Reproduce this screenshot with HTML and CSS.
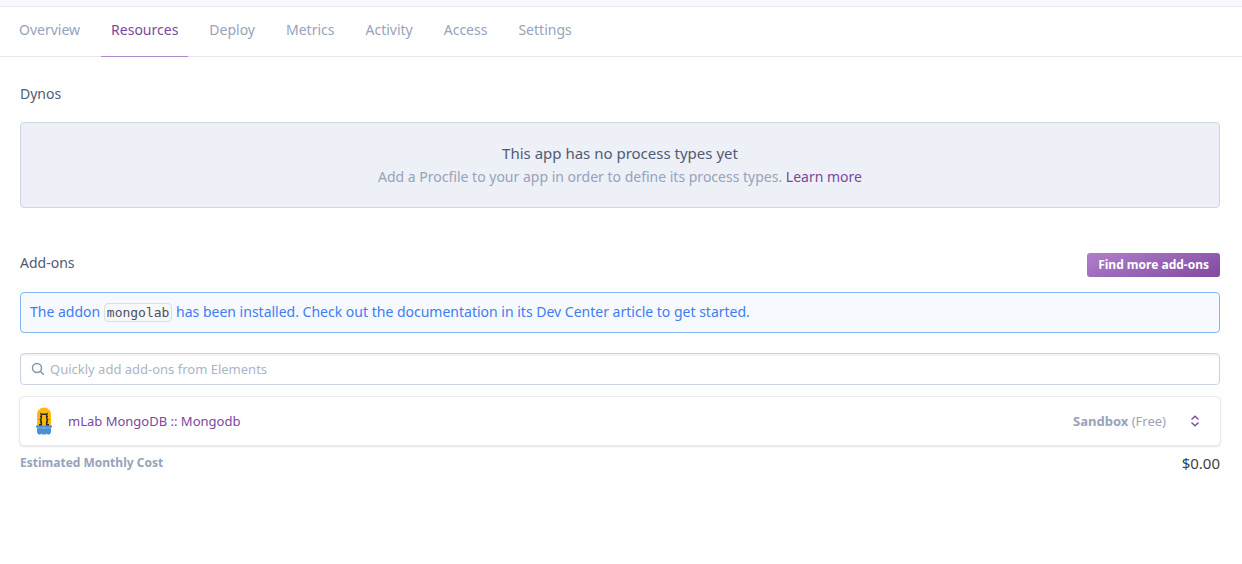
FILE: index.html
```html
<!DOCTYPE html>
<html lang="en">
<head>
<meta charset="utf-8">
<title>Resources</title>
<link rel="stylesheet" href="styles.css">
</head>
<body>
<nav class="tabs" aria-label="App sections">
  <a class="tab" href="#overview">Overview</a>
  <a class="tab tab-active" href="#resources" aria-current="page">Resources</a>
  <a class="tab" href="#deploy">Deploy</a>
  <a class="tab" href="#metrics">Metrics</a>
  <a class="tab" href="#activity">Activity</a>
  <a class="tab" href="#access">Access</a>
  <a class="tab" href="#settings">Settings</a>
</nav>
<main class="content">
  <section class="dynos">
    <h2 class="section-title">Dynos</h2>
    <div class="empty-panel">
      <p class="empty-title">This app has no process types yet</p>
      <p class="empty-text">Add a Procfile to your app in order to define its process types. <a class="link" href="#learn">Learn more</a></p>
    </div>
  </section>
  <section class="addons">
    <header class="addons-header">
      <h2 class="section-title">Add-ons</h2>
      <button class="find-button" type="button">Find more add-ons</button>
    </header>
    <p class="notice">The addon <code class="code">mongolab</code> has been installed. Check out the documentation in its Dev Center article to get started.</p>
    <label class="search">
      <svg class="search-icon" viewBox="0 0 14 14" aria-hidden="true"><circle cx="6" cy="6" r="4.500"/><path d="M9.300 9.300L12.800 12.800"/></svg>
      <input class="search-input" type="text" aria-label="Search add-ons" placeholder="Quickly add add-ons from Elements">
    </label>
    <div class="addon">
      <svg class="addon-logo" viewBox="0 0 16 28" aria-hidden="true">
        <path fill="#fdb90b" d="M1 19V7.500a7 7 0 0 1 14 0V19z"/>
        <path fill="#4a90d2" d="M0 18.500h16v2h-1v5l-1.500 2h-2l-.7-1-.8 1H6l-.8-1-.7 1h-2L1 25.500v-5H0z"/>
        <path fill="#79b4e6" d="M1 20.500h14v1H1zM7.500 19h1v3h-1z"/>
        <path fill="none" stroke="#2b2a28" stroke-width="1.500" d="M3 17.700h2.300V15l-.6-2 .6-2V7.300h5.400V11l.6 2-.6 2v2.700H13"/>
        <path fill="none" stroke="#2b2a28" stroke-width="1" d="M5.300 7l-1.300-1M10.700 7l1.300-1M5.300 9.500H4M10.700 9.500H12M5 12.500H3.500M11 12.500h1.500M5.300 15H3.900M10.700 15h1.400"/>
      </svg>
      <a class="link addon-name" href="#mlab">mLab MongoDB :: Mongodb</a>
      <span class="plan"><strong>Sandbox</strong> (Free)</span>
      <button class="plan-button" type="button" aria-label="Change plan">
        <svg class="chevrons" viewBox="0 0 10 12" aria-hidden="true"><path d="M1.500 4.500L5 1.200l3.500 3.300M1.500 7.500L5 10.800l3.500-3.300"/></svg>
      </button>
    </div>
    <footer class="cost">
      <span class="cost-label">Estimated Monthly Cost</span>
      <span class="cost-value">$0.00</span>
    </footer>
  </section>
</main>
</body>
</html>
```
FILE: styles.css
```css
* {
  box-sizing: border-box;
}

body {
  margin: 0;
  background: #fff;
  color: #4f5b75;
  font: 14px/20px "Noto Sans", "Open Sans", sans-serif;
}

h2,
p {
  margin: 0;
}

.tabs {
  display: flex;
  gap: 11px;
  padding: 0 9px;
  border-top: 6px solid #f6f8fc;
  border-bottom: 1px solid #e3e8f0;
  box-shadow: inset 0 1px #e7ecf2;
}

.tab {
  margin-bottom: -1px;
  padding: 14px 10px 16px;
  border-bottom: 1px solid transparent;
  color: #96a3bb;
  text-decoration: none;
}

.tab-active {
  border-color: #ad8bc8;
  color: #79489c;
}

.content {
  padding: 27px 22px 0 20px;
}

.section-title {
  font-size: 14px;
  font-weight: 400;
}

.empty-panel {
  margin-top: 18px;
  padding: 18px 20px;
  border: 1px solid #cfd7e6;
  border-radius: 4px;
  background: #edf0f6;
  text-align: center;
}

.empty-title {
  font-size: 15px;
  line-height: 24px;
}

.empty-text {
  line-height: 24px;
  color: #96a3bb;
}

.link {
  color: #79489c;
  text-decoration: none;
}

.addons {
  margin-top: 45px;
}

.addons-header {
  display: flex;
  justify-content: space-between;
}

.find-button {
  padding: 0 11px;
  border: 0;
  border-radius: 3px;
  background: linear-gradient(160deg, #b07fcb, #804a9f);
  color: #fff;
  font: bold 12px/24px "Noto Sans", "Open Sans", sans-serif;
}

.notice {
  margin-top: 15px;
  padding: 9px 10px 10px 9px;
  border: 1px solid #83b6f2;
  border-radius: 4px;
  background: #f6f9fe;
  color: #3f7df2;
}

.code {
  padding: 1px 2px;
  border: 1px solid #dcdfe4;
  border-radius: 4px;
  background: #f7f8fa;
  color: #4a5160;
  font: 13px "DejaVu Sans Mono", monospace;
}

.search {
  display: flex;
  align-items: center;
  gap: 5px;
  height: 32px;
  margin-top: 20px;
  padding: 0 10px;
  border: 1px solid #cad3e6;
  border-radius: 4px;
  box-shadow: inset 0 2px 2px #f1f2f5;
}

.search-icon {
  width: 14px;
  height: 14px;
  fill: none;
  stroke: #8794ae;
  stroke-width: 1.5;
}

.search-input {
  flex: 1;
  padding: 0 0 1px;
  border: 0;
  outline: 0;
  background: none;
  font: 13px/20px "Noto Sans", "Open Sans", sans-serif;
}

.search-input::placeholder {
  color: #aab5c8;
}

.addon {
  display: flex;
  align-items: center;
  height: 48px;
  margin-top: 12px;
  padding: 0 16px;
  border-radius: 4px;
  box-shadow: 0 0 0 1px #eaecef, 0 1px 2px 1px #dfe3e7;
  font-size: 13px;
}

.addon-logo {
  width: 16px;
  height: 28px;
}

.addon-name {
  margin-left: 16px;
}

.plan {
  margin-left: auto;
  color: #96a3bb;
}

.plan-button {
  display: flex;
  margin-left: 20px;
  padding: 0 4px;
  border: 0;
  background: none;
}

.chevrons {
  width: 10px;
  height: 12px;
  fill: none;
  stroke: #79489c;
  stroke-width: 1.3;
}

.cost {
  display: flex;
  justify-content: space-between;
  margin-top: 8px;
}

.cost-label {
  color: #96a3bb;
  font-size: 12px;
  font-weight: 700;
}

.cost-value {
  color: #3f3f44;
  font-size: 15px;
}
```
